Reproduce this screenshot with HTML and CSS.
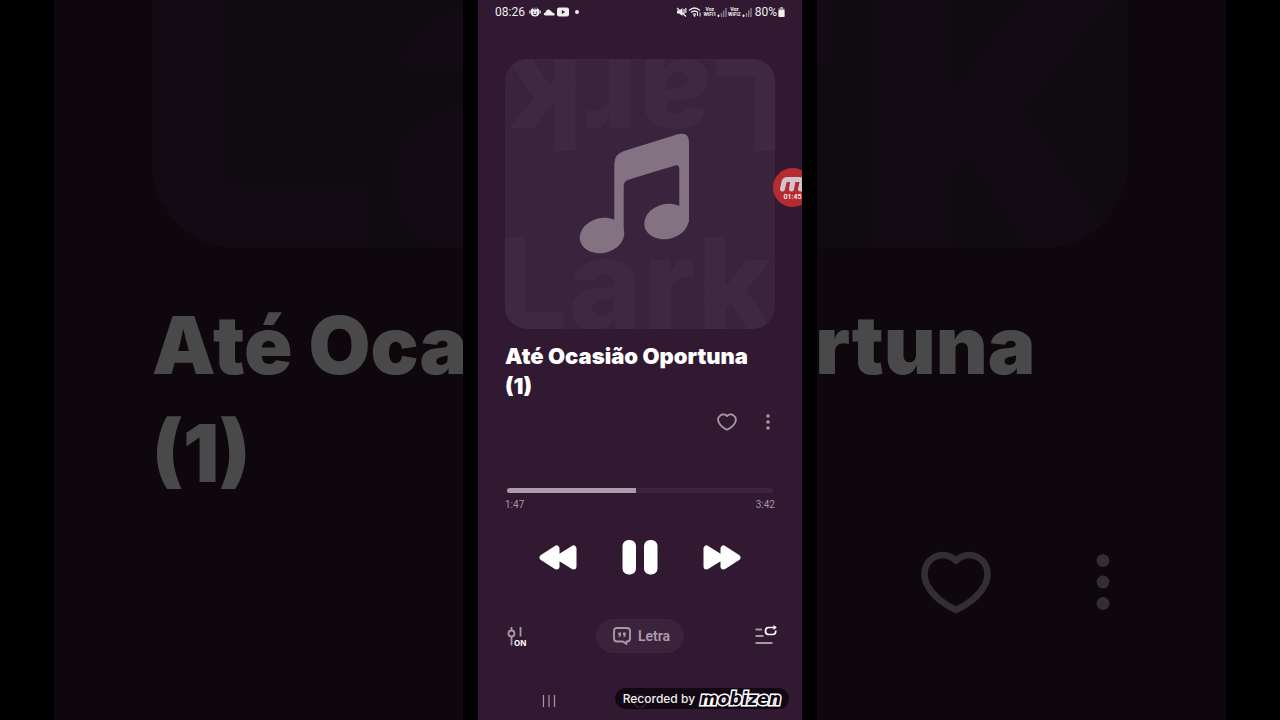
FILE: index.html
```html
<!DOCTYPE html>
<html lang="pt-BR">
<head>
<meta charset="utf-8">
<meta name="viewport" content="width=device-width, initial-scale=1">
<title>Até Ocasião Oportuna (1)</title>
<link rel="stylesheet" href="styles.css">
</head>
<body>
<svg class="sprites" aria-hidden="true">
  <symbol id="cover" viewBox="0 0 270 270">
    <rect width="270" height="270" fill="#3a233c"/>
    <g class="watermark">
      <text x="-8" y="270">Lark</text>
      <text x="-8" y="270" transform="rotate(180 135 135)">Lark</text>
    </g>
    <g fill="#837382">
      <path d="M109.300 176V105Q109.300 95 119 92L172 75.500Q184 72.500 184 83V163H174.300V110Q174.300 105.500 170 106.500L124 120.500Q118.700 122 118.700 127V176Z"/>
      <ellipse cx="97" cy="176.500" rx="22.500" ry="17.500" transform="rotate(-14 97 176.500)"/>
      <ellipse cx="161.500" cy="162.500" rx="22.500" ry="17.500" transform="rotate(-14 161.500 162.500)"/>
    </g>
  </symbol>
  <symbol id="heart" viewBox="0 0 24 24">
    <path d="M12 6.100C10.300 4.200 7.400 4 5.400 5.400C3 7.100 2.700 10.200 3.900 12.700C5.400 15.600 8.500 18.200 12 19.800C15.500 18.200 18.600 15.600 20.100 12.700C21.300 10.200 21 7.100 18.600 5.400C16.600 4 13.700 4.200 12 6.100Z" fill="none" stroke="currentColor" stroke-width="1.800" stroke-linejoin="round"/>
  </symbol>
  <symbol id="dots" viewBox="0 0 14 24">
    <g fill="currentColor"><circle cx="7" cy="6" r="1.800"/><circle cx="7" cy="12" r="1.800"/><circle cx="7" cy="18" r="1.800"/></g>
  </symbol>
  <symbol id="signal" viewBox="0 0 10 10">
    <path d="M1 8h1v1.500H1z" fill="#eee" stroke="#eee"/>
    <path d="M4.500 6v4M6.700 3.500V10M9 1v9" stroke="#8d7b8e" stroke-width="1.400"/>
  </symbol>
</svg>

<main class="stage">
  <div class="backdrop" aria-hidden="true">
    <svg class="backdrop-cover" viewBox="0 0 270 270" preserveAspectRatio="xMidYMax slice"><use href="#cover" width="270" height="270"/></svg>
    <p class="backdrop-title">Até Ocasião Oportuna (1)</p>
    <div class="backdrop-actions">
      <svg class="backdrop-heart"><use href="#heart"/></svg>
      <svg class="backdrop-dots"><use href="#dots"/></svg>
    </div>
  </div>

  <section class="phone">
    <header class="status">
      <div class="status-group">
        <time class="clock">08:26</time>
        <svg width="12" height="12" viewBox="0 0 12 12"><circle cx="6" cy="6" r="4.600" fill="#eee"/><path d="M.8 4.500v3M11.200 4.500v3" stroke="#cdbfce" stroke-width="1.400"/><path d="M6 .8l2 2H4zM3.800 6.200h1.400M6.800 6.200h1.400M4.200 8q1.800 1.500 3.600 0" fill="none" stroke="#321a33"/></svg>
        <svg width="12" height="12" viewBox="0 0 12 12"><path d="M2.500 9.500C.2 9.500.2 6.500 2.500 6.500C3 2.800 7.300 2.500 8 5.500C9 5.300 9.500 6 9.600 6.700C12.300 6.700 12.200 9.500 10.300 9.500Z" fill="#eee"/></svg>
        <svg width="12" height="12" viewBox="0 0 12 12"><rect y="1.500" width="12" height="9" rx="2" fill="#eee"/><path d="M4.800 4l3.400 2-3.400 2z" fill="#321a33"/></svg>
        <span class="status-dot"></span>
      </div>
      <div class="status-group status-right">
        <svg width="11" height="12" viewBox="0 0 11 12"><path d="M1 4.500h2.200L6.500 2v8L3.200 7.500H1z" fill="#eee"/><path d="M1 2l9 8.500M8 3v5M9.800 2v5" stroke="#eee" stroke-width="1.200"/></svg>
        <svg width="14" height="12" viewBox="0 0 14 12"><path d="M1 4.500Q6.500-.5 12 4.500M3 6.600Q6.500 3.400 10 6.600M5 8.500Q6.500 7.200 8 8.500" fill="none" stroke="#eee" stroke-width="1.300"/><path d="M9.500 10V6.500M12 6.500V10.500" stroke="#eee"/><circle cx="6.500" cy="9.800" r="1" fill="#eee"/></svg>
        <span class="carrier"><span>Voz</span><span>WiFi1</span></span>
        <svg width="10" height="10"><use href="#signal"/></svg>
        <span class="carrier"><span>Voz</span><span>WiFi2</span></span>
        <svg width="10" height="10"><use href="#signal"/></svg>
        <span class="battery-text">80%</span>
        <svg width="7" height="12" viewBox="0 0 7 12"><path d="M2 1h3v1.500h1.500V11H.5V2.500H2z" fill="#a396a4"/><rect x=".5" y="4" width="6" height="7" rx="1" fill="#eee"/></svg>
      </div>
    </header>

    <svg class="cover" role="img" aria-label="Capa do álbum"><use href="#cover"/></svg>
    <h1 class="title">Até Ocasião Oportuna (1)</h1>
    <div class="actions">
      <button type="button" aria-label="Favoritar"><svg width="24" height="24"><use href="#heart"/></svg></button>
      <button type="button" aria-label="Mais opções"><svg width="14" height="24"><use href="#dots"/></svg></button>
    </div>

    <input class="seek" type="range" min="0" max="222" value="107" aria-label="Posição da música">
    <div class="times"><span>1:47</span><span>3:42</span></div>

    <div class="transport">
      <button type="button" aria-label="Anterior"><svg width="38" height="36" viewBox="0 0 38 36"><path d="M3.500 18.500L17.500 9.500V27.500ZM20 18.500L34.500 9.500V27.500Z" fill="#fff" stroke="#fff" stroke-width="6" stroke-linejoin="round"/></svg></button>
      <button type="button" aria-label="Pausar"><svg width="36" height="36" viewBox="0 0 36 36"><rect x=".5" y="1" width="13.500" height="34.500" rx="6" fill="#fff"/><rect x="22" y="1" width="13.500" height="34.500" rx="6" fill="#fff"/></svg></button>
      <button type="button" aria-label="Próxima"><svg width="38" height="36" viewBox="0 0 38 36"><path d="M34.500 18.500L20.500 9.500V27.500ZM18 18.500L3.500 9.500V27.500Z" fill="#fff" stroke="#fff" stroke-width="6" stroke-linejoin="round"/></svg></button>
    </div>

    <div class="tools">
      <button type="button" aria-label="Equalizador ligado"><svg width="24" height="22" viewBox="0 0 24 22"><path d="M8.500 2v4M8.500 11v9.500M17.500 2v9.500" stroke="#a798a8" stroke-width="1.800"/><circle cx="8.500" cy="8.500" r="3" fill="none" stroke="#a798a8" stroke-width="1.800"/><text class="eq-state" x="11" y="20.500">ON</text></svg></button>
      <button type="button" class="lyrics"><svg width="20" height="20" viewBox="0 0 20 20"><path d="M5 2H15Q18 2 18 5V12.500Q18 15.500 15 15.500H14.500V18L11 15.500H5Q2 15.500 2 12.500V5Q2 2 5 2Z" fill="none" stroke="#a798a8" stroke-width="1.900" stroke-linejoin="round"/><path d="M6.300 6.500h2.800v2.200q0 2.200-2.100 2.800l-.4-.8q1-.6 1-1.500H6.300zM11 6.500h2.800v2.200q0 2.200-2.100 2.800l-.4-.8q1-.6 1-1.500H11z" fill="#a798a8"/></svg>Letra</button>
      <button type="button" aria-label="Fila de reprodução"><svg width="24" height="22" viewBox="0 0 24 22"><path d="M2.500 4.500H9M2.500 11H10.500M2.500 18H19.500" stroke="#a798a8" stroke-width="1.800"/><path d="M21.500 2.500H15.500Q12.500 2.500 12.500 6T15.500 9.500H19.500Q22.800 9.500 22.800 5.500" fill="none" stroke="#fff" stroke-width="1.700"/><path d="M20.500 0L23.800 2.500L20.500 5z" fill="#fff"/></svg></button>
    </div>

    <nav class="nav" aria-label="Sistema">
      <button type="button" aria-label="Recentes"><svg width="14" height="14" viewBox="0 0 14 14"><path d="M1.500 1v12M7 1v12M12.500 1v12" stroke="#a798a8" stroke-width="1.200"/></svg></button>
      <button type="button" aria-label="Início"><svg width="14" height="14" viewBox="0 0 14 14"><rect x="1" y="1" width="12" height="12" rx="5" fill="none" stroke="#a798a8" stroke-width="1.200"/></svg></button>
      <button type="button" aria-label="Voltar"><svg width="14" height="14" viewBox="0 0 14 14"><path d="M10 1L4 7l6 6" fill="none" stroke="#a798a8" stroke-width="1.200"/></svg></button>
    </nav>

    <button type="button" class="recorder">
      <svg width="27" height="16" viewBox="0 0 27 16"><path d="M3.500 13L5 6Q5.700 3.500 8.500 3.500H20Q23.500 3.500 23 6.500L21.500 13M14 4.500L12.500 13" fill="none" stroke="#d3c3cf" stroke-width="5" stroke-linecap="round"/></svg>
      <span>01:45</span>
    </button>
    <div class="credit"><span>Recorded by</span><span class="brand">mobizen</span></div>
  </section>
</main>
</body>
</html>
```
FILE: styles.css
```css
* {
  box-sizing: border-box;
}

body {
  margin: 0;
  background: #000;
  color: #fff;
  font-family: Roboto, "Liberation Sans", sans-serif;
}

svg {
  display: block;
  flex: none;
}

button {
  padding: 0;
  border: 0;
  background: none;
  color: inherit;
  font: inherit;
}

.sprites {
  position: absolute;
  width: 0;
  height: 0;
}

.watermark {
  fill: #3f2842;
  font-family: Inter, sans-serif;
  font-size: 126px;
  font-weight: 800;
}

.stage {
  display: grid;
  min-height: 100vh;
  overflow: hidden;
}

/* Dimmed, enlarged copy of the player behind the phone */
.backdrop {
  grid-area: 1 / 1;
  margin: 0 54px;
  padding: 0 98px;
  background: #311931;
  opacity: 0.29;
}

.backdrop-cover {
  width: 100%;
  height: 248px;
  border-radius: 0 0 86px 86px;
}

.backdrop-title {
  margin: 43px 0 0;
  font-family: Inter, sans-serif;
  font-size: 80px;
  font-weight: 900;
  line-height: 108px;
}

.backdrop-actions {
  display: flex;
  justify-content: flex-end;
  gap: 79px;
  margin-top: 32px;
  color: #b0a3b1;
}

.backdrop-heart {
  width: 86px;
  height: 86px;
}

.backdrop-dots {
  width: 50px;
  height: 86px;
}

.phone {
  grid-area: 1 / 1;
  position: relative;
  display: flex;
  flex-direction: column;
  justify-self: center;
  width: 100%;
  max-width: 354px;
  padding: 0 27px 12px;
  overflow: hidden;
  border: solid #000;
  border-width: 0 15px;
  background: #311931;
}

.status {
  display: flex;
  align-items: center;
  justify-content: space-between;
  height: 24px;
  margin: 0 -10px;
  color: #eee;
  font-size: 12px;
}

.status-group {
  display: flex;
  align-items: center;
  gap: 2px;
}

.status-right {
  gap: 1px;
}

.clock {
  margin-right: 2px;
}

.status-dot {
  width: 4px;
  height: 4px;
  margin-left: 4px;
  border-radius: 50%;
  background: #eee;
}

.carrier {
  display: flex;
  flex-direction: column;
  align-items: center;
  font-size: 5px;
  font-weight: 700;
  line-height: 5px;
}

.battery-text {
  margin-left: 2px;
}

.cover {
  width: 100%;
  height: auto;
  aspect-ratio: 1;
  margin-top: 35px;
  border-radius: 22px;
}

.title {
  margin: 12px 0 0;
  font-family: Inter, sans-serif;
  font-size: 22px;
  font-weight: 900;
  line-height: 30px;
}

.actions {
  display: flex;
  justify-content: flex-end;
  gap: 22px;
  margin-top: 9px;
  color: #a798a8;
}

.seek {
  appearance: none;
  height: 5px;
  margin: 54px 2px 0;
  border-radius: 3px;
  background: linear-gradient(to right, #ac9dad 48%, #3b243d 48%);
}

.seek::-webkit-slider-thumb {
  appearance: none;
  width: 1px;
  height: 5px;
  background: #ac9dad;
}

.times {
  display: flex;
  justify-content: space-between;
  margin-top: 6px;
  color: #a798a8;
  font-size: 10px;
  line-height: 12px;
}

.transport {
  display: flex;
  justify-content: space-between;
  margin-top: 28px;
  padding: 0 34px;
}

.tools {
  display: flex;
  align-items: center;
  justify-content: space-between;
  margin: 44px -2px 0;
}

.eq-state {
  fill: #fff;
  font-family: Inter, sans-serif;
  font-size: 8px;
  font-weight: 700;
}

.lyrics {
  display: flex;
  align-items: center;
  gap: 6px;
  height: 34px;
  padding: 0 14px 0 16px;
  border-radius: 17px;
  background: #3b233c;
  color: #ac9dad;
  font-size: 14px;
  font-weight: 600;
}

.nav {
  display: flex;
  justify-content: space-between;
  margin-top: auto;
  padding: 0 37px;
}

.recorder {
  position: absolute;
  top: 168px;
  right: -10px;
  display: flex;
  flex-direction: column;
  align-items: center;
  width: 39px;
  height: 39px;
  padding-top: 8px;
  border-radius: 50%;
  background: #b52c30;
  color: #fff;
  font-size: 7px;
  font-weight: 500;
  line-height: 10px;
}

.credit {
  position: absolute;
  right: 13px;
  bottom: 11px;
  display: flex;
  align-items: center;
  gap: 5px;
  height: 21px;
  padding: 0 8px;
  border-radius: 11px;
  background: rgb(8 2 10 / 76%);
  color: #f2edf2;
  font-family: Inter, sans-serif;
  font-size: 12px;
  font-weight: 500;
  white-space: nowrap;
}

.brand {
  color: #120814;
  font-family: "DejaVu Sans", sans-serif;
  font-size: 17px;
  font-style: italic;
  font-weight: 700;
  line-height: 20px;
  paint-order: stroke fill;
  -webkit-text-stroke: 3px #fff;
}
```
